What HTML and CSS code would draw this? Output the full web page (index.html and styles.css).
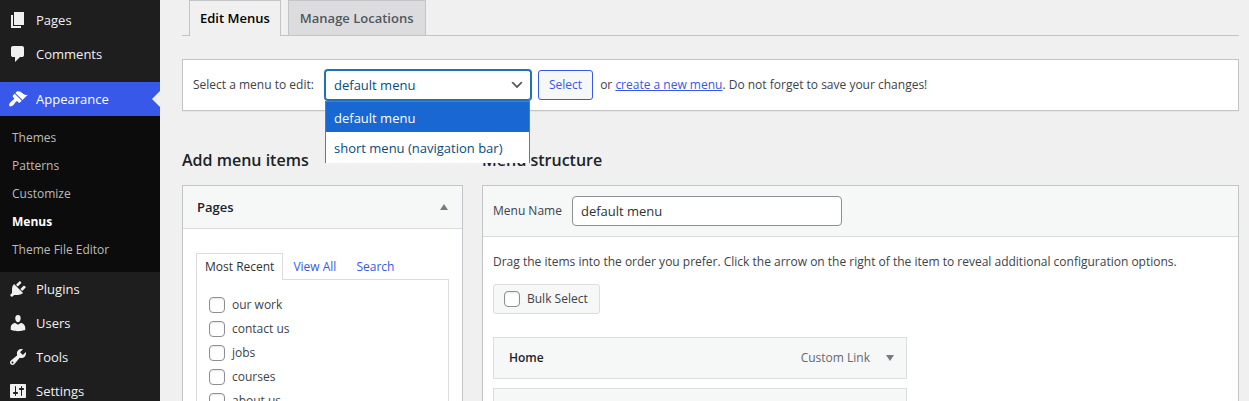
FILE: index.html
```html
<!DOCTYPE html>
<html lang="en">
<head>
<meta charset="utf-8">
<title>Menus</title>
<link rel="stylesheet" href="styles.css">
</head>
<body>
<div class="layout">
  <nav class="sidebar" aria-label="Main menu">
    <a class="nav-item" href="#"><svg class="icon" viewBox="0 0 20 20"><path d="M6 15V2h10v13H6zm-1 1h8v2H3V5h2v11z"/></svg>Pages</a>
    <a class="nav-item" href="#"><svg class="icon" viewBox="0 0 20 20"><path d="M5 2h9q.82 0 1.41.59T16 4v7q0 .82-.59 1.41T14 13h-2l-5 5v-5H5q-.82 0-1.41-.59T3 11V4q0-.82.59-1.41T5 2z"/></svg>Comments</a>
    <a class="nav-item current" href="#"><svg class="icon" viewBox="0 0 20 20"><path d="M14.48 11.06L7.41 3.99l1.5-1.5c.5-.56 2.3-.47 3.51.32 1.21.8 1.43 1.28 2.91 2.1 1.18.64 2.45 1.26 4.45.85zm-.71.71L6.7 4.7 4.93 6.47c-.39.39-.39 1.02 0 1.41l1.06 1.06c.39.39.39 1.03 0 1.42-.6.6-1.43 1.11-2.21 1.69-.35.26-.7.53-1.01.84C1.43 14.23.4 16.08 1.4 17.07c.99 1 2.84-.03 4.18-1.36.31-.31.58-.66.85-1.02.57-.78 1.08-1.61 1.69-2.21.39-.39 1.02-.39 1.41 0l1.06 1.06c.39.39 1.02.39 1.41 0z"/></svg>Appearance</a>
    <div class="submenu">
      <a href="#">Themes</a>
      <a href="#">Patterns</a>
      <a href="#">Customize</a>
      <a class="active" href="#">Menus</a>
      <a href="#">Theme File Editor</a>
    </div>
    <a class="nav-item" href="#"><svg class="icon" viewBox="0 0 20 20"><path d="M13.11 4.36L9.87 7.6 8 5.73l3.24-3.24c.35-.34 1.05-.2 1.56.32.52.51.66 1.21.31 1.55zm-8 1.77l.91-1.12 9.01 9.01-1.19.84c-.71.71-2.63 1.16-3.82 1.16H6.14L4.9 17.26c-.59.59-1.54.59-2.12 0-.59-.58-.59-1.53 0-2.12l1.24-1.24v-3.88c0-1.13.4-3.19 1.09-3.89zm7.26 3.97l3.24-3.24c.34-.35 1.04-.21 1.55.31.52.51.66 1.21.31 1.55l-3.24 3.25z"/></svg>Plugins</a>
    <a class="nav-item" href="#"><svg class="icon" viewBox="0 0 20 20"><path d="M10 9.25c-2.27 0-2.73-3.44-2.73-3.44C7 4.02 7.82 2 9.97 2c2.16 0 2.98 2.02 2.71 3.81 0 0-.41 3.44-2.68 3.44zm0 2.57L12.72 10c2.39 0 4.52 2.33 4.52 4.53v2.49s-3.65 1.13-7.24 1.13c-3.65 0-7.24-1.13-7.24-1.13v-2.49c0-2.25 1.94-4.48 4.47-4.48z"/></svg>Users</a>
    <a class="nav-item" href="#"><svg class="icon" viewBox="0 0 20 20"><path d="M16.68 9.77c-1.34 1.34-3.3 1.67-4.95.99l-5.41 6.52c-.99.99-2.59.99-3.58 0s-.99-2.59 0-3.57l6.52-5.42c-.68-1.65-.35-3.61.99-4.95 1.28-1.28 3.12-1.62 4.72-1.06l-2.89 2.89 2.82 2.82 2.86-2.87c.53 1.58.18 3.39-1.08 4.65zM3.81 16.21c.4.39 1.04.39 1.43 0 .4-.4.4-1.04 0-1.43-.39-.4-1.03-.4-1.43 0-.39.39-.39 1.03 0 1.43z"/></svg>Tools</a>
    <a class="nav-item" href="#"><svg class="icon" viewBox="0 0 20 20"><path d="M18 16V4c0-.55-.45-1-1-1H3c-.55 0-1 .45-1 1v12c0 .55.45 1 1 1h14c.55 0 1-.45 1-1zM8 11h1c.55 0 1 .45 1 1s-.45 1-1 1H8v1.500c0 .28-.22.5-.5.5s-.5-.22-.5-.5V13H6c-.55 0-1-.45-1-1s.45-1 1-1h1V5.500c0-.28.22-.5.5-.5s.5.22.5.5V11zm5-2h-1c-.55 0-1-.45-1-1s.45-1 1-1h1V5.500c0-.28.22-.5.5-.5s.5.22.5.5V7h1c.55 0 1 .45 1 1s-.45 1-1 1h-1v5.500c0 .28-.22.5-.5.5s-.5-.22-.5-.5V9z"/></svg>Settings</a>
  </nav>

  <main class="content">
    <nav class="tabs" aria-label="Menu screens">
      <a class="tab tab-active" href="#">Edit Menus</a>
      <a class="tab" href="#">Manage Locations</a>
    </nav>

    <form class="manage">
      <label class="manage-label" for="menu-select">Select a menu to edit:</label>
      <div class="picker">
        <select id="menu-select" class="picker-select">
          <option selected>default menu</option>
          <option>short menu (navigation bar)</option>
        </select>
        <svg class="chevron" viewBox="0 0 20 20"><path d="M5 6l5 5 5-5 2 1-7 7-7-7z"/></svg>
        <ul class="options" role="listbox" aria-label="Menus">
          <li class="option option-active" role="option" aria-selected="true">default menu</li>
          <li class="option" role="option" aria-selected="false">short menu (navigation bar)</li>
        </ul>
      </div>
      <button class="button" type="button">Select</button>
      <p class="hint">or <a href="#">create a new menu</a>. Do not forget to save your changes!</p>
    </form>

    <div class="columns">
      <section class="add-items">
        <h2 class="heading">Add menu items</h2>
        <div class="panel">
          <div class="panel-head">
            <h3 class="panel-title">Pages</h3>
            <button class="toggle" type="button" aria-label="Collapse Pages"><svg class="arrow" viewBox="0 0 8 6"><path d="M4 0l4 6H0z"/></svg></button>
          </div>
          <div class="panel-body">
            <div class="subtabs">
              <a class="subtab subtab-active" href="#">Most Recent</a>
              <a class="subtab" href="#">View All</a>
              <a class="subtab" href="#">Search</a>
            </div>
            <div class="checklist">
              <label class="check"><input type="checkbox" class="box">our work</label>
              <label class="check"><input type="checkbox" class="box">contact us</label>
              <label class="check"><input type="checkbox" class="box">jobs</label>
              <label class="check"><input type="checkbox" class="box">courses</label>
              <label class="check"><input type="checkbox" class="box">about us</label>
            </div>
          </div>
        </div>
      </section>

      <section class="structure">
        <h2 class="heading">Menu structure</h2>
        <div class="panel">
          <div class="name-row">
            <label for="menu-name">Menu Name</label>
            <input id="menu-name" class="name-input" type="text" value="default menu">
          </div>
          <div class="structure-body">
            <p class="description">Drag the items into the order you prefer. Click the arrow on the right of the item to reveal additional configuration options.</p>
            <label class="bulk"><input type="checkbox" class="box">Bulk Select</label>
            <div class="items">
              <div class="item">
                <span class="item-title">Home</span>
                <span class="item-type">Custom Link</span>
                <button class="toggle" type="button" aria-label="Edit Home"><svg class="arrow" viewBox="0 0 8 6"><path d="M0 0h8L4 6z"/></svg></button>
              </div>
              <div class="item"></div>
            </div>
          </div>
        </div>
      </section>
    </div>
  </main>
</div>
</body>
</html>
```
FILE: styles.css
```css
* { box-sizing: border-box; }

body {
  margin: 0;
  height: 100vh;
  overflow: hidden;
  background: #f0f0f1;
  color: #3c434a;
  font: 12px/20px "Open Sans", "Noto Sans", sans-serif;
}

h2, h3, p, ul { margin: 0; padding: 0; }
a { color: #3858e9; }
button, input, select { font: inherit; }

.layout {
  display: grid;
  grid-template-columns: 160px minmax(0, 1fr);
  min-height: 100vh;
}

/* Sidebar */
.sidebar {
  padding-top: 3px;
  background: #1e1e1e;
}
.nav-item {
  position: relative;
  display: flex;
  align-items: center;
  gap: 8px;
  height: 34px;
  padding-left: 8px;
  color: #f0f0f1;
  font-size: 13px;
  text-decoration: none;
}
.icon {
  width: 20px;
  height: 20px;
  fill: #f0f0f1;
}
.current {
  margin-top: 11px;
  background: #3858e9;
  color: #fff;
}
.current .icon { fill: #fff; }
.current::after {
  content: "";
  position: absolute;
  right: 0;
  top: 9px;
  border: 8px solid transparent;
  border-left: 0;
  border-right-color: #f0f0f1;
}
.submenu {
  padding: 8px 0;
  background: #0c0c0c;
}
.submenu a {
  display: block;
  padding: 4px 12px;
  color: #bbb;
  text-decoration: none;
}
.submenu .active {
  color: #fff;
  font-weight: 700;
}

/* Content */
.content { padding: 0 10px 0 22px; }

.tabs {
  display: flex;
  gap: 7px;
  height: 36px;
  padding-left: 7px;
  border-bottom: 1px solid #c3c4c7;
}
.tab {
  height: 35px;
  padding: 5px 11px;
  border: 1px solid #c3c4c7;
  border-bottom: 0;
  background: #dcdcde;
  color: #50575e;
  font-size: 13px;
  font-weight: 600;
  line-height: 24px;
  text-decoration: none;
}
.tab-active {
  height: 36px;
  padding: 5px 10px;
  background: #f0f0f1;
  color: #000;
}

.manage {
  display: flex;
  align-items: center;
  gap: 7px;
  margin-top: 23px;
  padding: 10px;
  border: 1px solid #c3c4c7;
  background: #fff;
  box-shadow: 0 1px 1px rgba(0, 0, 0, .04);
}
.manage-label { min-width: 125px; }
.picker {
  position: relative;
  width: 206px;
}
.picker-select {
  display: block;
  width: 100%;
  height: 30px;
  padding: 0 24px 0 8px;
  appearance: none;
  border: 1px solid #2271b1;
  border-radius: 3px;
  outline: 0;
  background: #fff;
  box-shadow: 0 0 0 1px #2271b1;
  color: #0a4b78;
  font-size: 13px;
}
.chevron {
  position: absolute;
  right: 6px;
  top: 7px;
  width: 16px;
  height: 16px;
  fill: #555;
  pointer-events: none;
}
.options {
  position: absolute;
  z-index: 2;
  top: 31px;
  left: 0;
  width: 205px;
  border: 1px solid #767676;
  border-bottom: 0;
  background: #fff;
  list-style: none;
}
.option {
  padding: 6px 8px 5px;
  color: #0a4b78;
  font-size: 13px;
  line-height: 20px;
  white-space: nowrap;
}
.option-active {
  padding-bottom: 4px;
  background: #1967d2;
  color: #fff;
}
.button {
  height: 30px;
  padding: 0 10px;
  border: 1px solid #3858e9;
  border-radius: 3px;
  background: #f6f7f7;
  color: #3858e9;
}

.columns {
  display: grid;
  grid-template-columns: 281px minmax(0, 1fr);
  gap: 19px;
  margin-top: 37px;
}
.heading {
  margin-bottom: 13px;
  color: #1d2327;
  font-size: 16px;
  font-weight: 600;
  line-height: 24px;
}
.panel {
  border: 1px solid #c3c4c7;
  background: #fff;
}
.panel-head {
  display: flex;
  align-items: center;
  justify-content: space-between;
  padding: 11px 14px;
  border-bottom: 1px solid #dcdcde;
  background: #f6f7f7;
}
.panel-title {
  color: #1d2327;
  font-size: 13px;
  font-weight: 600;
  line-height: 20px;
}
.toggle {
  display: flex;
  padding: 0;
  border: 0;
  background: none;
}
.arrow {
  width: 8px;
  height: 6px;
  fill: #787c82;
}
.panel-body { padding: 24px 13px; }
.subtabs { display: flex; }
.subtab {
  padding: 3px 9px 2px;
  border: 1px solid transparent;
  border-bottom: 0;
  text-decoration: none;
}
.subtab-active {
  margin-bottom: -1px;
  padding: 3px 8px;
  border-color: #dcdcde;
  background: #fff;
  color: #2c3338;
}
.checklist {
  display: grid;
  gap: 4px;
  padding: 15px 12px;
  border: 1px solid #dcdcde;
}
.check, .bulk {
  display: flex;
  align-items: center;
  gap: 7px;
}
.box {
  width: 16px;
  height: 16px;
  margin: 0;
  appearance: none;
  border: 1px solid #8c8f94;
  border-radius: 4px;
  background: #fff;
  box-shadow: inset 0 1px 2px rgba(0, 0, 0, .1);
}

.name-row {
  display: flex;
  align-items: center;
  gap: 10px;
  padding: 10px;
  border-bottom: 1px solid #dcdcde;
  background: #f6f7f7;
}
.name-input {
  width: 270px;
  height: 30px;
  padding: 0 8px;
  border: 1px solid #8c8f94;
  border-radius: 4px;
  background: #fff;
  color: #2c3338;
  font-size: 13px;
}
.structure-body { padding: 15px 10px; }
.bulk {
  width: fit-content;
  height: 30px;
  margin: 12px 0 23px;
  padding: 0 11px 0 10px;
  border: 1px solid #dcdcde;
  border-radius: 3px;
  background: #f6f7f7;
}
.items {
  display: grid;
  gap: 9px;
  max-width: 414px;
}
.item {
  display: flex;
  align-items: center;
  gap: 16px;
  min-height: 42px;
  padding: 0 12px 0 15px;
  border: 1px solid #dcdcde;
  background: #f6f7f7;
}
.item-title {
  flex: 1;
  color: #1d2327;
  font-weight: 600;
}
.item-type { color: #646970; }
```
